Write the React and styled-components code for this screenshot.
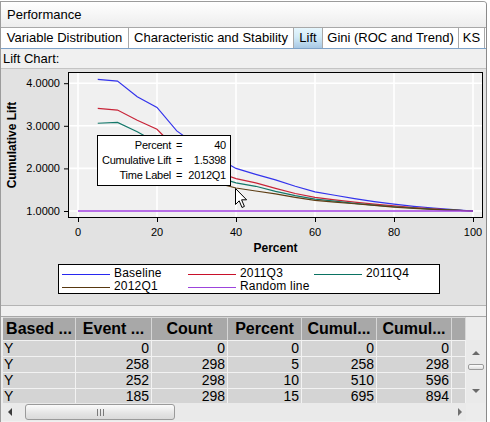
import styled, { createGlobalStyle } from 'styled-components';

const GlobalStyle = createGlobalStyle`
  html, body {
    margin: 0;
    padding: 0;
    background: #ffffff;
  }
  body {
    font-family: "Liberation Sans", Arial, sans-serif;
  }
`

const tabs = [
  { label: 'Variable Distribution', w: 128 },
  { label: 'Characteristic and Stability', w: 165 },
  { label: 'Lift', w: 29, active: true },
  { label: 'Gini (ROC and Trend)', w: 136 },
  { label: 'KS', w: 26 },
]

const percents = [5, 10, 15, 20, 25, 30, 35, 40, 45, 50, 55, 60, 65, 70, 75, 80, 85, 90, 95, 100]

const series = [
  { name: 'Baseline', color: '#3434ec', values: [4.09, 4.05, 3.68, 3.43, 2.88, 2.55, 2.26, 2.0, 1.86, 1.73, 1.58, 1.45, 1.37, 1.29, 1.22, 1.16, 1.11, 1.07, 1.03, 1.0] },
  { name: '2011Q3', color: '#c82438', values: [3.41, 3.37, 3.13, 2.92, 2.45, 2.15, 1.92, 1.76, 1.66, 1.53, 1.41, 1.32, 1.26, 1.21, 1.16, 1.12, 1.08, 1.05, 1.02, 1.0] },
  { name: '2011Q4', color: '#14786a', values: [3.06, 3.08, 2.86, 2.6, 2.3, 2.0, 1.8, 1.66, 1.58, 1.46, 1.36, 1.28, 1.23, 1.18, 1.14, 1.1, 1.07, 1.04, 1.02, 1.0] },
  { name: '2012Q1', color: '#5e3e14', values: [2.7, 2.6, 2.4, 2.2, 2.0, 1.82, 1.66, 1.54, 1.47, 1.4, 1.32, 1.25, 1.21, 1.17, 1.13, 1.09, 1.06, 1.04, 1.02, 1.0] },
]

const legendItems = [
  { name: 'Baseline', color: '#2828f0' },
  { name: '2011Q3', color: '#c8102a' },
  { name: '2011Q4', color: '#0a7262' },
  { name: '2012Q1', color: '#583810' },
  { name: 'Random line', color: '#9c44dc' },
]

const columns = [
  { title: 'Based ...', w: 73 },
  { title: 'Event ...', w: 76 },
  { title: 'Count', w: 76 },
  { title: 'Percent', w: 74 },
  { title: 'Cumul...', w: 75 },
  { title: 'Cumul...', w: 75 },
]

const rows = [
  ['Y', 0, 0, 0, 0, 0],
  ['Y', 258, 298, 5, 258, 298],
  ['Y', 252, 298, 10, 510, 596],
  ['Y', 185, 298, 15, 695, 894],
]

const gridCols = columns.map(c => `${c.w}px`).join(' ') + ' 14px'

// chart drawn in page coordinates
const X0 = 78
const XS = 3.95
const Y1 = 211
const YS = 42.6
const px = p => X0 + p * XS
const py = v => Y1 - (v - 1) * YS

const LiftChart = () => (
  <ChartBox>
    <svg width="485" height="191" viewBox="1 69 485 191">
      <rect x="68.5" y="72.5" width="414" height="145" fill="#f0f0f0" stroke="#000" strokeWidth="1" />
      {[0, 20, 40, 60, 80, 100].map(p => (
        <line key={'gx' + p} x1={px(p)} x2={px(p)} y1="73" y2="217" stroke="#ffffff" strokeWidth="1.6" />
      ))}
      {[1, 2, 3, 4].map(v => (
        <line key={'gy' + v} x1="69" x2="482" y1={py(v)} y2={py(v)} stroke="#ffffff" strokeWidth="1.6" />
      ))}
      {series.map(s => (
        <polyline
          key={s.name}
          fill="none"
          stroke={s.color}
          strokeWidth="1.2"
          points={s.values.map((v, i) => `${px(percents[i])},${py(v)}`).join(' ')}
        />
      ))}
      <line x1={px(0)} x2={px(100)} y1={py(1)} y2={py(1)} stroke="#a040e0" strokeWidth="1.4" />
      <rect x="68.5" y="72.5" width="414" height="145" fill="none" stroke="#000" strokeWidth="1" />
      {[1, 2, 3, 4].map(v => (
        <g key={'ty' + v}>
          <line x1="64" x2="68" y1={py(v) + 0.5} y2={py(v) + 0.5} stroke="#000" />
          <text x="60" y={py(v) + 4} textAnchor="end" fontSize="11" fill="#000">{v.toFixed(4)}</text>
        </g>
      ))}
      {[0, 20, 40, 60, 80, 100].map(p => (
        <g key={'tx' + p}>
          <line x1={px(p) + 0.5} x2={px(p) + 0.5} y1="218" y2="222" stroke="#000" />
          <text x={px(p)} y="236" textAnchor="middle" fontSize="11" fill="#000">{p}</text>
        </g>
      ))}
      <text x="275.5" y="252" textAnchor="middle" fontSize="12" fontWeight="bold" fill="#000">Percent</text>
      <text x="16" y="145" transform="rotate(-90 16 145)" textAnchor="middle" fontSize="12" fontWeight="bold" fill="#000">Cumulative Lift</text>
    </svg>
    <Tooltip>
      <TipLabel>Percent</TipLabel><TipEq>=</TipEq><TipValue>40</TipValue>
      <TipLabel>Cumulative Lift</TipLabel><TipEq>=</TipEq><TipValue>1.5398</TipValue>
      <TipLabel>Time Label</TipLabel><TipEq>=</TipEq><TipValue>2012Q1</TipValue>
    </Tooltip>
    <Cursor width="13" height="21" viewBox="0 0 13 21">
      <path d="M0.5 0.5 L0.5 16.5 L4.2 12.8 L7 19.5 L9.4 18.4 L6.6 11.8 L11.6 11.8 Z" fill="#ffffff" stroke="#000000" strokeWidth="1" strokeLinejoin="miter" />
    </Cursor>
  </ChartBox>
)

const App = () => {
  return (
    <>
      <GlobalStyle />
      <Window>
        <TitleBar>Performance</TitleBar>
        <TabStrip>
          {tabs.map(t => (
            <Tab key={t.label} $w={t.w} $active={t.active}>{t.label}</Tab>
          ))}
        </TabStrip>
        <SectionLabel>Lift Chart:</SectionLabel>
        <ChartPanel>
          <LiftChart />
          <Legend>
            {legendItems.map(l => (
              <LegendItem key={l.name}>
                <Swatch $color={l.color} />
                <span>{l.name}</span>
              </LegendItem>
            ))}
          </Legend>
        </ChartPanel>
        <Splitter />
        <TableArea>
          <HeaderRow>
            {columns.map((c, i) => (
              <HeaderCell key={i}>{c.title}</HeaderCell>
            ))}
            <HeaderCell />
          </HeaderRow>
          <Corner />
          <TableBody>
            {rows.map((r, i) => (
              <DataRow key={i}>
                {r.map((v, j) => (
                  <DataCell key={j} $left={j === 0}>{v}</DataCell>
                ))}
                <DataCell />
              </DataRow>
            ))}
          </TableBody>
          <VScroll>
            <ArrowUp />
            <VThumb />
            <ArrowDown />
          </VScroll>
          <HScroll>
            <ArrowLeft />
            <HThumb>
              <Grip />
            </HThumb>
            <ArrowRight />
          </HScroll>
          <Corner />
        </TableArea>
      </Window>
    </>
  )
}

export default App

const Window = styled.div`
  width: 485px;
  height: 421px;
  margin-top: 1px;
  border: 1px solid #9c9c9c;
  border-right-color: #8a8a8a;
  border-bottom: none;
  border-top-right-radius: 4px;
  background: #f0f0f0;
  display: flex;
  flex-direction: column;
  overflow: hidden;
`

const TitleBar = styled.div`
  height: 25px;
  line-height: 25px;
  padding-left: 6px;
  font-size: 13px;
  color: #000;
  background: linear-gradient(#ffffff, #ededed);
  border-bottom: 1px solid #a8a8a8;
`

const TabStrip = styled.div`
  display: flex;
  height: 20px;
  background: #ffffff;
  border-bottom: 1px solid #7ea2c8;
`

const Tab = styled.div`
  box-sizing: border-box;
  width: ${p => p.$w}px;
  height: 20px;
  line-height: 20px;
  text-align: center;
  font-size: 13px;
  color: #000;
  white-space: nowrap;
  border-right: 1px solid #a9a9a9;
  background: ${p => (p.$active ? 'linear-gradient(#e6f6fd, #d2ebf8 45%, #a8c8e4)' : '#ffffff')};
`

const SectionLabel = styled.div`
  height: 19px;
  line-height: 19px;
  padding-left: 2px;
  font-size: 13px;
  color: #000;
`

const ChartPanel = styled.div`
  height: 236px;
  background: #e2e2e2;
  border-top: 1px solid #c4c4c4;
  border-bottom: 1px solid #b4b4b4;
  display: flex;
  flex-direction: column;
`

const ChartBox = styled.div`
  position: relative;
  height: 191px;
  & svg {
    display: block;
  }
  & text {
    font-family: "Liberation Sans", Arial, sans-serif;
  }
`

const Tooltip = styled.div`
  position: absolute;
  left: 96px;
  top: 66px;
  box-sizing: border-box;
  width: 134px;
  height: 51px;
  padding: 2px 4px 0 3px;
  background: #ffffff;
  border: 1px solid #000;
  display: grid;
  grid-template-columns: 70px 16px 1fr;
  grid-auto-rows: 15px;
  font-size: 11px;
  letter-spacing: -0.25px;
  line-height: 15px;
  color: #000;
`

const TipLabel = styled.span`
  text-align: right;
  white-space: nowrap;
`

const TipEq = styled.span`
  text-align: center;
`

const TipValue = styled.span`
  text-align: right;
`

const Cursor = styled.svg`
  position: absolute;
  left: 234px;
  top: 119px;
`

const Legend = styled.div`
  box-sizing: border-box;
  margin: 4px 0 0 57px;
  width: 382px;
  height: 30px;
  padding: 2px 0 0 3px;
  background: #ffffff;
  border: 1px solid #000;
  display: grid;
  grid-template-columns: repeat(3, 126px);
  grid-auto-rows: 13px;
  font-size: 12px;
  letter-spacing: 0.2px;
  color: #000;
`

const LegendItem = styled.div`
  display: flex;
  align-items: flex-start;
  gap: 4px;
  height: 13px;
  line-height: 13px;
  white-space: nowrap;
`

const Swatch = styled.div`
  flex: none;
  width: 48px;
  height: 0;
  margin-top: 7px;
  border-top: 1px solid ${p => p.$color};
`

const Splitter = styled.div`
  height: 10px;
  background: #f0f0f0;
  border-bottom: 1px solid #a8a8a8;
`

const TableArea = styled.div`
  padding-left: 2px;
  display: grid;
  grid-template-columns: 463px 19px;
  grid-template-rows: 23px 63px 18px;
  background: #ececec;
`

const HeaderRow = styled.div`
  display: grid;
  grid-template-columns: ${gridCols};
  background: #a8a8a8;
`

const HeaderCell = styled.div`
  box-sizing: border-box;
  border-top: 1px solid #d6d6d6;
  border-right: 1px solid #d6d6d6;
  text-align: center;
  font-size: 16px;
  font-weight: bold;
  line-height: 22px;
  color: #000;
  white-space: nowrap;
  overflow: hidden;
`

const Corner = styled.div`
  background: #ececec;
`

const TableBody = styled.div`
  overflow: hidden;
  background: #d4d4d4;
`

const DataRow = styled.div`
  display: grid;
  grid-template-columns: ${gridCols};
  height: 16px;
  border-top: 1px solid #f2f2f2;
  box-sizing: border-box;
`

const DataCell = styled.div`
  box-sizing: border-box;
  border-right: 1px solid #f2f2f2;
  padding: 0 2px 0 1px;
  text-align: ${p => (p.$left ? 'left' : 'right')};
  font-size: 14px;
  line-height: 15px;
  color: #000;
  overflow: hidden;
`

const VScroll = styled.div`
  background: #eaeaea;
  display: flex;
  flex-direction: column;
  align-items: center;
  padding-top: 11px;
`

const ArrowUp = styled.div`
  width: 0;
  height: 0;
  border-left: 4px solid transparent;
  border-right: 4px solid transparent;
  border-bottom: 4px solid #6a6a6a;
`

const ArrowDown = styled.div`
  margin-top: 19px;
  width: 0;
  height: 0;
  border-left: 4px solid transparent;
  border-right: 4px solid transparent;
  border-top: 4px solid #6a6a6a;
`

const VThumb = styled.div`
  margin-top: 9px;
  box-sizing: border-box;
  width: 16px;
  height: 6px;
  border: 1px solid #9a9a9a;
  border-radius: 2px;
  background: linear-gradient(#fdfdfd, #dedede);
`

const HScroll = styled.div`
  background: #eaeaea;
  display: flex;
  align-items: center;
  padding-left: 5px;
`

const ArrowLeft = styled.div`
  width: 0;
  height: 0;
  border-top: 4px solid transparent;
  border-bottom: 4px solid transparent;
  border-right: 4px solid #3c3c3c;
`

const ArrowRight = styled.div`
  margin-left: auto;
  margin-right: 4px;
  width: 0;
  height: 0;
  border-top: 4px solid transparent;
  border-bottom: 4px solid transparent;
  border-left: 4px solid #707070;
`

const HThumb = styled.div`
  margin-left: 13px;
  box-sizing: border-box;
  width: 150px;
  height: 16px;
  border: 1px solid #9a9a9a;
  border-radius: 3px;
  background: linear-gradient(#fbfbfb, #e4e4e4 60%, #dadada);
  display: flex;
  align-items: center;
  justify-content: center;
`

const Grip = styled.div`
  width: 7px;
  height: 7px;
  background: repeating-linear-gradient(90deg, #7a7a7a 0 1px, transparent 1px 3px);
`
